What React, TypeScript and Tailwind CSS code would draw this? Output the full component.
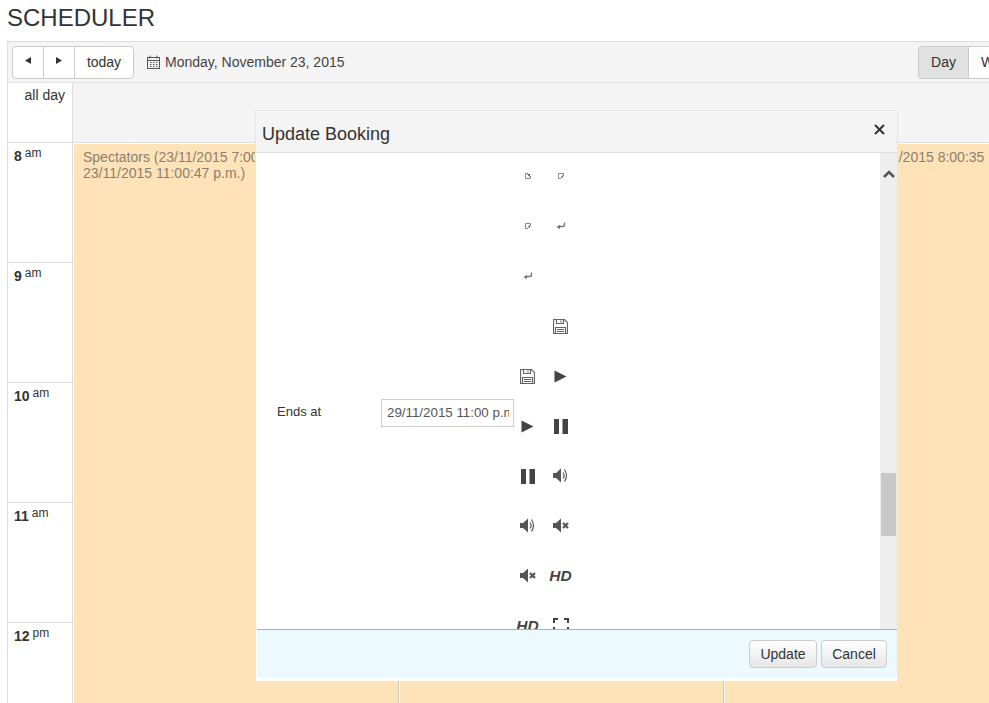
import React from 'react';

const hours: Array<[string, string]> = [
  ['8', 'am'],
  ['9', 'am'],
  ['10', 'am'],
  ['11', 'am'],
  ['12', 'pm'],
];

function CalendarIcon() {
  return (
    <svg width="13" height="14" viewBox="0 0 13 14" fill="none" stroke="#555" strokeWidth="1">
      <rect x="0.5" y="2.5" width="12" height="11" />
      <path d="M0.500 5.500h12M3 0.500v3M10 0.500v3" />
      <path d="M3 7.500h1.500M6 7.500h1.500M9 7.500h1.500M3 9.500h1.500M6 9.500h1.500M9 9.500h1.500M3 11.500h1.500M6 11.500h1.500M9 11.500h1.500" />
    </svg>
  );
}

function NavArrow({ right }: { right?: boolean }) {
  return (
    <svg className="-mt-[3px]" width="6" height="7" viewBox="0 0 6 7">
      <path d={right ? 'M0 0l6 3.500L0 7z' : 'M6 0L0 3.500 6 7z'} fill="#333" />
    </svg>
  );
}

function Resize({ flip }: { flip?: boolean }) {
  return (
    <svg width="6" height="6" viewBox="0 0 6 6" fill="none" stroke="#888" strokeWidth="1">
      <path d={flip ? 'M5.500 3V0.500h-5v5H3' : 'M3 0.500H0.500v5h5V3'} />
      {flip ? <path d="M2.500 4.500h2.500V2z" fill="#555" stroke="none" /> : <path d="M2 1h3v3z" fill="#555" stroke="none" />}
    </svg>
  );
}

function ReturnIcon() {
  return (
    <svg width="10" height="8" viewBox="0 0 10 8" fill="none">
      <path d="M8.500 0.500v2.500q0 1.500-2 1.500H3" stroke="#777" strokeWidth="1.400" />
      <path d="M0.500 5L4 2.800v4.400z" fill="#777" />
    </svg>
  );
}

function SaveIcon() {
  return (
    <svg width="15" height="15" viewBox="0 0 15 15" fill="none" stroke="#666" strokeWidth="1.200">
      <path d="M0.500 0.500h11l3 3v11h-14z" />
      <path d="M3.500 0.500v4h7v-4M8 1.500v2" />
      <path d="M2.500 14.500v-6h10v6M4 10.500h7M4 12.500h7" />
    </svg>
  );
}

function PlayIcon() {
  return (
    <svg width="13" height="13" viewBox="0 0 13 13">
      <path d="M0.500 0.500L12.500 6.500L0.500 12.500z" fill="#444" />
    </svg>
  );
}

function PauseIcon() {
  return (
    <svg width="14" height="15" viewBox="0 0 14 15">
      <path d="M0 0h5v15H0zM8.500 0H14v15H8.500z" fill="#444" />
    </svg>
  );
}

function VolumeIcon() {
  return (
    <svg className="-mt-[2px]" width="16" height="15" viewBox="0 0 16 15" fill="none">
      <path d="M0 5h3L8 0.500v14L3 10H0z" fill="#555" />
      <path d="M10 4.500q2.200 3 0 6M11.500 1.500q4 6 0 12" stroke="#555" strokeWidth="1.200" />
    </svg>
  );
}

function MuteIcon() {
  return (
    <svg className="-mt-[2px]" width="16" height="15" viewBox="0 0 16 15" fill="none">
      <path d="M0 5h3L8 0.500v14L3 10H0z" fill="#555" />
      <path d="M10 5l5 5M15 5l-5 5" stroke="#555" strokeWidth="2.200" />
    </svg>
  );
}

function HdLabel() {
  return <span className="text-[15.5px] font-bold italic leading-none text-[#444]">HD</span>;
}

function FullscreenIcon() {
  return (
    <svg className="-translate-y-[1px]" width="16" height="14" viewBox="0 0 16 14" fill="none" stroke="#444" strokeWidth="2">
      <path d="M1 5V1h4M11 1h4v4M15 9v4h-4M5 13H1V9" />
    </svg>
  );
}

const column1: React.ReactNode[] = [
  <Resize />,
  <Resize flip />,
  <ReturnIcon />,
  null,
  <SaveIcon />,
  <PlayIcon />,
  <PauseIcon />,
  <VolumeIcon />,
  <MuteIcon />,
  <HdLabel />,
];

const column2: React.ReactNode[] = [
  <Resize flip />,
  <ReturnIcon />,
  null,
  <SaveIcon />,
  <PlayIcon />,
  <PauseIcon />,
  <VolumeIcon />,
  <MuteIcon />,
  <HdLabel />,
  <FullscreenIcon />,
];

function IconColumn({ items }: { items: React.ReactNode[] }) {
  return (
    <div className="flex w-[33px] flex-col">
      {items.map((item, i) => (
        <div key={i} className="flex h-[50px] shrink-0 items-center justify-center">
          {item}
        </div>
      ))}
    </div>
  );
}

function UpdateBooking() {
  return (
    <div className="absolute left-[255px] top-[110px] flex h-[571px] w-[643px] flex-col rounded-t-[3px] border-x border-t border-[#e6e6e6] bg-white text-[#333]">
      <div className="flex h-[42px] shrink-0 items-center justify-between border-b border-[#ddd] bg-[#f4f4f4] pl-[6px] pr-[12px]">
        <span className="mt-[6px] text-[18px]">Update Booking</span>
        <svg className="-mt-[4px]" width="11" height="11" viewBox="0 0 11 11" fill="none" stroke="#333" strokeWidth="2">
          <path d="M1 1l9 9M10 1L1 10" />
        </svg>
      </div>
      <div className="flex h-[476px] shrink-0 overflow-hidden">
        <div className="flex flex-1 overflow-hidden pl-[21px]">
          <div className="w-[104px] shrink-0 pt-[249px] text-[13px]">Ends at</div>
          <div className="shrink-0 pt-[246px]">
            <div className="flex h-[28px] w-[133px] items-center border border-[#ccc] pl-[5px] text-[13.33px] text-[#555]">
              <div className="w-[122px] overflow-hidden whitespace-nowrap">29/11/2015 11:00 p.m.</div>
            </div>
          </div>
          <div className="-mt-[2px] ml-[-3px] flex shrink-0">
            <IconColumn items={column1} />
            <IconColumn items={column2} />
          </div>
        </div>
        <div className="flex w-[17px] shrink-0 flex-col items-center bg-[#eee] pt-[17px]">
          <svg width="12" height="8" viewBox="0 0 12 8" fill="none" stroke="#555" strokeWidth="2.500">
            <path d="M1 7l5-5 5 5" />
          </svg>
          <div className="mt-[295px] h-[63px] w-[15px] bg-[#c8c8c8]" />
        </div>
      </div>
      <div className="ml-px flex h-[49px] shrink-0 items-center justify-end gap-[4px] border-t border-[#9db3bf] bg-[#ecf9ff] pr-[10px] text-[14px]">
        <button className="h-[28px] w-[68px] rounded-[4px] border border-[#ccc] bg-gradient-to-b from-white to-[#e6e6e6]">
          Update
        </button>
        <button className="h-[28px] w-[66px] rounded-[4px] border border-[#ccc] bg-gradient-to-b from-white to-[#e6e6e6]">
          Cancel
        </button>
      </div>
    </div>
  );
}

function EventBlock({ className, children }: { className: string; children?: React.ReactNode }) {
  return (
    <div className={`h-full shrink-0 rounded-t-[3px] bg-[#fee3b8] pl-[9px] pr-[4px] pt-[5px] text-[14px] leading-[16px] text-[#8b8070] ${className}`}>
      {children}
    </div>
  );
}

export default function App() {
  return (
    <div className="relative h-[703px] w-[989px] overflow-hidden bg-white font-['Liberation_Sans',Arial,sans-serif] text-[#333]">
      <div className="flex h-[41px] items-start pl-[7px] pt-[4px] text-[24px] leading-[28px]">SCHEDULER</div>

      <div className="ml-[7px] flex h-[662px] w-[982px] flex-col border-l border-t border-[#ddd]">
        <div className="flex h-[41px] shrink-0 items-center border-b border-[#e2e2e2] bg-[#f4f4f4] pl-[4px] text-[14px]">
          <div className="flex h-[33px] items-stretch rounded-[4px] border border-[#ccc] bg-white">
            <div className="flex w-[31px] items-center justify-center border-r border-[#ccc]">
              <NavArrow />
            </div>
            <div className="flex w-[31px] items-center justify-center border-r border-[#ccc]">
              <NavArrow right />
            </div>
            <div className="flex w-[58px] items-center justify-center">today</div>
          </div>
          <div className="ml-[13px]">
            <CalendarIcon />
          </div>
          <span className="ml-[5px] text-[#444]">Monday, November 23, 2015</span>
          <div className="ml-auto flex h-[33px] w-[71px] items-stretch overflow-hidden rounded-l-[4px] border-y border-l border-[#ccc]">
            <div className="flex w-[50px] shrink-0 items-center justify-center border-r border-[#ccc] bg-[#e1e1e1]">Day</div>
            <div className="flex shrink-0 items-center whitespace-nowrap bg-white pl-[12px]">Week</div>
          </div>
        </div>

        <div className="flex h-[60px] shrink-0 border-b border-[#ddd]">
          <div className="w-[65px] shrink-0 border-r border-[#ddd] pr-[7px] pt-[4px] text-right text-[14px] leading-[16px]">
            all day
          </div>
          <div className="flex-1 bg-[#f4f4f4]" />
        </div>

        <div className="flex flex-1 overflow-hidden">
          <div className="w-[65px] shrink-0 border-r border-[#ddd]">
            {hours.map(([hour, period]) => (
              <div key={hour} className="h-[120px] border-b border-[#ddd] pl-[6px] pt-[5px] text-[14px] leading-[16px]">
                <b>{hour}</b>
                <span className="relative -top-[4px] ml-[3px] text-[12px]">{period}</span>
              </div>
            ))}
          </div>
          <div className="flex flex-1 gap-[1px] pl-[1px] pt-[1px]">
            <EventBlock className="w-[325px] border-r border-[#cfc9bd]">
              Spectators (23/11/2015 7:00:47 p.m. -
              <br />
              23/11/2015 11:00:47 p.m.)
            </EventBlock>
            <EventBlock className="w-[324px] border-r border-[#cfc9bd]" />
            <EventBlock className="w-[270px]">
              <span className="whitespace-nowrap">Match Coordinators (23/11/2015 8:00:35</span>
            </EventBlock>
          </div>
        </div>
      </div>

      <UpdateBooking />
    </div>
  );
}
